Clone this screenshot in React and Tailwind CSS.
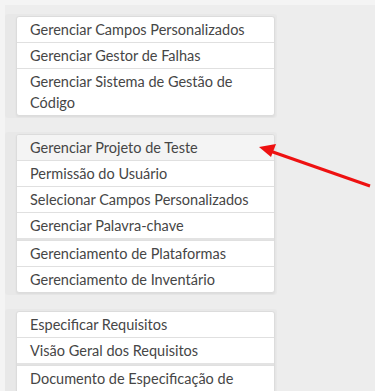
import React from "react";

const groups = [
  {
    items: [
      { label: "Gerenciar Campos Personalizados" },
      { label: "Gerenciar Gestor de Falhas" },
      { label: "Gerenciar Sistema de Gestão de Código" },
    ],
  },
  {
    items: [
      { label: "Gerenciar Projeto de Teste", active: true },
      { label: "Permissão do Usuário" },
      { label: "Selecionar Campos Personalizados" },
      { label: "Gerenciar Palavra-chave", split: true },
      { label: "Gerenciamento de Plataformas" },
      { label: "Gerenciamento de Inventário" },
    ],
  },
  {
    items: [
      { label: "Especificar Requisitos" },
      { label: "Visão Geral dos Requisitos", split: true },
      { label: "Documento de Especificação de Requisitos" },
    ],
  },
];

function MenuGroup({ items }) {
  return (
    <div className="bg-[#e8e8e8] rounded-[3px] pl-[11px] py-[2px] w-[272px]">
      <div className="w-[259px] bg-white border border-[#dcdcdc] rounded-[3px] shadow-[0_1px_2px_rgba(0,0,0,0.06)] overflow-hidden">
        {items.map((it, i) => (
          <div
            key={i}
            className={[
              "px-[13px] py-[2px] leading-[21px] text-[14.5px] text-[#464646]",
              i > 0 ? "border-t border-[#e0e0e0]" : "",
              it.split ? "border-b-2 border-b-[#e3e3e3]" : "",
              it.active ? "bg-[#f4f4f4]" : "",
            ].join(" ")}
          >
            {it.label}
          </div>
        ))}
      </div>
    </div>
  );
}

export default function App() {
  return (
    <div
      className="relative w-[375px] h-[391px] overflow-hidden bg-[#f4f4f4] pt-[5px] pl-[5px]"
      style={{ fontFamily: "Lato, 'DejaVu Sans', sans-serif" }}
    >
      <div className="h-full bg-[#ededed] pt-[9px] flex flex-col gap-[14px]">
        {groups.map((g, i) => (
          <MenuGroup key={i} items={g.items} />
        ))}
      </div>

      {/* red annotation arrow */}
      <svg className="absolute left-0 top-0 pointer-events-none" width="375" height="391">
        <line x1="370" y1="186" x2="270" y2="151" stroke="#ee1111" strokeWidth="3" />
        <polygon points="259,147 276,144 271,157" fill="#ee1111" />
      </svg>
    </div>
  );
}
